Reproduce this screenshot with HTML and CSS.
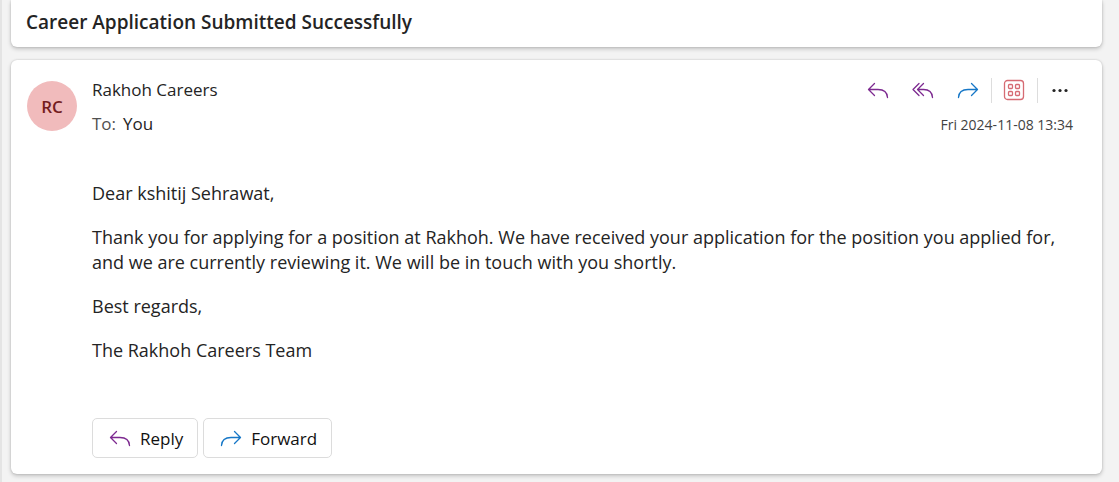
FILE: index.html
```html
<!DOCTYPE html>
<html lang="en">
<head>
<meta charset="utf-8">
<title>Career Application Submitted Successfully</title>
<link rel="stylesheet" href="styles.css">
</head>
<body>
<svg class="sprite" aria-hidden="true">
  <symbol id="reply" viewBox="0 0 22 22"><path d="M7.500 4.500 1.500 10.500 7.500 16.500M1.500 10.500H11Q20 10.500 20.500 18.500"/></symbol>
  <symbol id="reply-all" viewBox="0 0 22 22"><path d="M7 4.500 1 10.500 7 16.500M11.500 4.500 5.500 10.500 11.500 16.500M5.500 10.500H11.500Q20 10.500 20.500 18.500"/></symbol>
  <symbol id="forward" viewBox="0 0 22 22"><path d="M14.500 4.500 20.500 10.500 14.500 16.500M20.500 10.500H11Q2 10.500 1.500 18.500"/></symbol>
</svg>
<main class="pane">
  <header class="card subject"><h1 class="title">Career Application Submitted Successfully</h1></header>
  <article class="card message">
    <div class="avatar">RC</div>
    <div class="content">
      <div class="head">
        <div class="people">
          <div class="sender">Rakhoh Careers</div>
          <div class="to"><span class="label">To:</span><span>You</span></div>
        </div>
        <div class="side">
          <div class="tools">
            <button class="tool purple" aria-label="Reply"><svg class="icon"><use href="#reply"/></svg></button>
            <button class="tool purple" aria-label="Reply all"><svg class="icon"><use href="#reply-all"/></svg></button>
            <button class="tool blue" aria-label="Forward"><svg class="icon"><use href="#forward"/></svg></button>
            <span class="divider"></span>
            <button class="tool red" aria-label="Apps"><svg class="icon" viewBox="0 0 22 22"><rect x="1.500" y="1.500" width="19" height="19" rx="3"/><rect x="5.500" y="5.500" width="4" height="4" rx="1"/><rect x="12.500" y="5.500" width="4" height="4" rx="1"/><rect x="5.500" y="12.500" width="4" height="4" rx="1"/><rect x="12.500" y="12.500" width="4" height="4" rx="1"/></svg></button>
            <span class="divider"></span>
            <button class="tool more" aria-label="More actions"><svg class="icon dots" viewBox="0 0 22 22"><circle cx="5" cy="11.500" r="1.600"/><circle cx="11" cy="11.500" r="1.600"/><circle cx="17" cy="11.500" r="1.600"/></svg></button>
          </div>
          <time class="date" datetime="2024-11-08T13:34">Fri 2024-11-08 13:34</time>
        </div>
      </div>
      <div class="body">
        <p>Dear kshitij Sehrawat,</p>
        <p>Thank you for applying for a position at Rakhoh. We have received your application for the position you applied for, and we are currently reviewing it. We will be in touch with you shortly.</p>
        <p>Best regards,</p>
        <p>The Rakhoh Careers Team</p>
      </div>
      <div class="actions">
        <button class="action"><svg class="icon purple"><use href="#reply"/></svg>Reply</button>
        <button class="action"><svg class="icon blue"><use href="#forward"/></svg>Forward</button>
      </div>
    </div>
  </article>
</main>
</body>
</html>
```
FILE: styles.css
```css
* { box-sizing: border-box; }
body {
  margin: 0;
  background: #f3f3f3;
  color: #242424;
  font: 18px/25px "Open Sans", "Noto Sans", sans-serif;
}
.sprite { display: none; }
.pane {
  display: flex;
  flex-direction: column;
  gap: 13px;
  min-height: 100vh;
  padding: 0 17px 8px 9px;
  border-left: 2px solid #e4e4e4;
}
.card {
  background: #fff;
  border-radius: 6px;
  box-shadow: 0 0 2px rgba(0, 0, 0, .18), 0 2px 4px rgba(0, 0, 0, .2);
}
.subject {
  padding: 10px 15px 12px;
  border-radius: 0 0 6px 6px;
}
.title { margin: 0; font-size: 19px; line-height: 25px; font-weight: 600; }
.message { display: flex; flex: 1; gap: 15px; padding: 16px; }
.avatar {
  display: flex;
  align-items: center;
  justify-content: center;
  flex: none;
  width: 50px;
  height: 50px;
  margin-top: 5px;
  border-radius: 50%;
  background: #f1bbbc;
  color: #751d1f;
  font-size: 17px;
  font-weight: 600;
}
.content { flex: 1; min-width: 0; }
.head { display: flex; justify-content: space-between; }
.people { display: flex; flex-direction: column; gap: 9px; padding-top: 1px; font-size: 17px; }
.to { display: flex; gap: 7px; }
.label { color: #505050; }
.side { display: flex; flex-direction: column; align-items: flex-end; gap: 9px; }
.tools { display: flex; align-items: center; height: 28px; }
.tool { display: flex; padding: 0 12px 0 11px; border: 0; background: none; color: #242424; }
.tool.more { padding-right: 15px; }
.icon {
  width: 22px;
  height: 22px;
  fill: none;
  stroke: currentColor;
  stroke-width: 1.3;
  stroke-linecap: round;
  stroke-linejoin: round;
}
.dots { fill: currentColor; stroke: none; }
.purple { color: #7d2a90; }
.blue { color: #1677c7; }
.red { color: #d66b73; }
.divider { width: 1px; height: 25px; background: #ddd; }
.date { padding-right: 13px; color: #424242; font-size: 14px; line-height: 24px; }
.body { padding-top: 44px; }
.body p { margin: 0 0 19px; }
.actions { display: flex; gap: 5px; padding-top: 36px; }
.action {
  display: flex;
  align-items: center;
  gap: 9px;
  height: 40px;
  padding: 0 14px 0 16px;
  border: 1px solid #dcdcdc;
  border-radius: 5px;
  background: #fff;
  color: #111;
  font: inherit;
  font-size: 17px;
}
```
